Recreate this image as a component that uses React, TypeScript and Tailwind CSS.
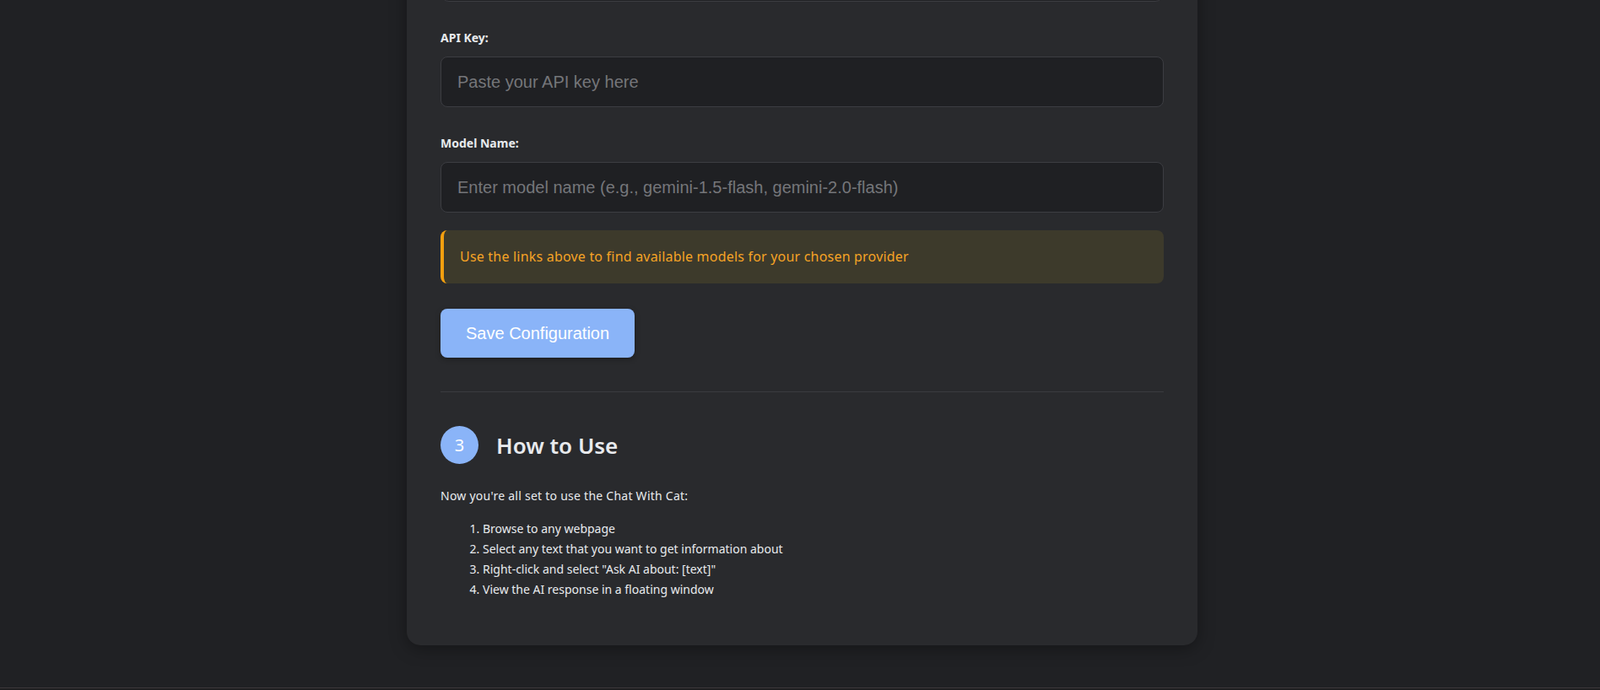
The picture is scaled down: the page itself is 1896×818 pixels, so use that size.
const steps = [
  "Browse to any webpage",
  "Select any text that you want to get information about",
  'Right-click and select "Ask AI about: [text]"',
  "View the AI response in a floating window",
];

const uiFont = "font-['Noto_Sans','Open_Sans',sans-serif]";
const fieldFont = "font-['Liberation_Sans',Arial,sans-serif]";

function Field({ label, placeholder }: { label: string; placeholder: string }) {
  return (
    <div className="mt-[33px]">
      <label className="mb-[13px] block text-[14px] font-bold leading-[19px] text-[#e8eaed]">
        {label}
      </label>
      <input
        type="text"
        placeholder={placeholder}
        className={`${fieldFont} block h-[60px] w-full rounded-lg border border-[#3c3d42] bg-[#1f2023] px-[19px] text-[20px] text-[#e8eaed] outline-none placeholder:text-[#75767a]`}
      />
    </div>
  );
}

export default function App() {
  return (
    <div className={`${uiFont} flex h-[818px] flex-col overflow-hidden bg-[#202124]`}>
      <div className="flex flex-1 justify-center pl-[5px]">
        <div className="-mt-[98px] h-fit w-[937px] rounded-2xl bg-[#292a2d] px-10 pt-10 pb-10 shadow-[0_4px_20px_rgba(0,0,0,0.35)]">
          {/* provider select, scrolled mostly out of view */}
          <div className="h-[60px] rounded-[10px] border border-[#3c3d42] bg-[#1f2023]" />

          <Field label="API Key:" placeholder="Paste your API key here" />
          <Field
            label="Model Name:"
            placeholder="Enter model name (e.g., gemini-1.5-flash, gemini-2.0-flash)"
          />

          <div className="mt-[21px] rounded-lg border-l-4 border-[#f5a00f] bg-[#3d3a2b] py-5 pl-[19px] pr-5 text-[16px] leading-[23px] tracking-[0.2px] text-[#f5a325]">
            Use the links above to find available models for your chosen provider
          </div>

          <button
            type="button"
            className={`${fieldFont} mt-[30px] h-[58px] rounded-lg bg-[#8ab4f8] px-[30px] text-[20px] text-white shadow-[0_2px_6px_rgba(0,0,0,0.3)]`}
          >
            Save Configuration
          </button>

          <div className="mt-[40px] h-px bg-[#3a3b3f]" />

          <div className="mt-[40px] flex items-center gap-[21px]">
            <div className="flex h-[45px] w-[45px] items-center justify-center rounded-full bg-[#8ab4f8] text-[20px] text-white">
              3
            </div>
            <h2 className="text-[26px] font-semibold leading-[36px] text-[#e8eaed]">How to Use</h2>
          </div>

          <p className="mt-[28px] text-[14px] leading-[19px] tracking-[0.25px] text-[#e8eaed]">
            Now you're all set to use the Chat With Cat:
          </p>
          <ol className="mt-[18px] mb-[14px] list-decimal pl-[50px] text-[14px] leading-6 text-[#e8eaed]">
            {steps.map((s) => (
              <li key={s}>{s}</li>
            ))}
          </ol>
        </div>
      </div>
      <div className="mt-[50px] h-px bg-[#3d393b]" />
      <div className="h-[2px] bg-[#1e1e20]" />
    </div>
  );
}
